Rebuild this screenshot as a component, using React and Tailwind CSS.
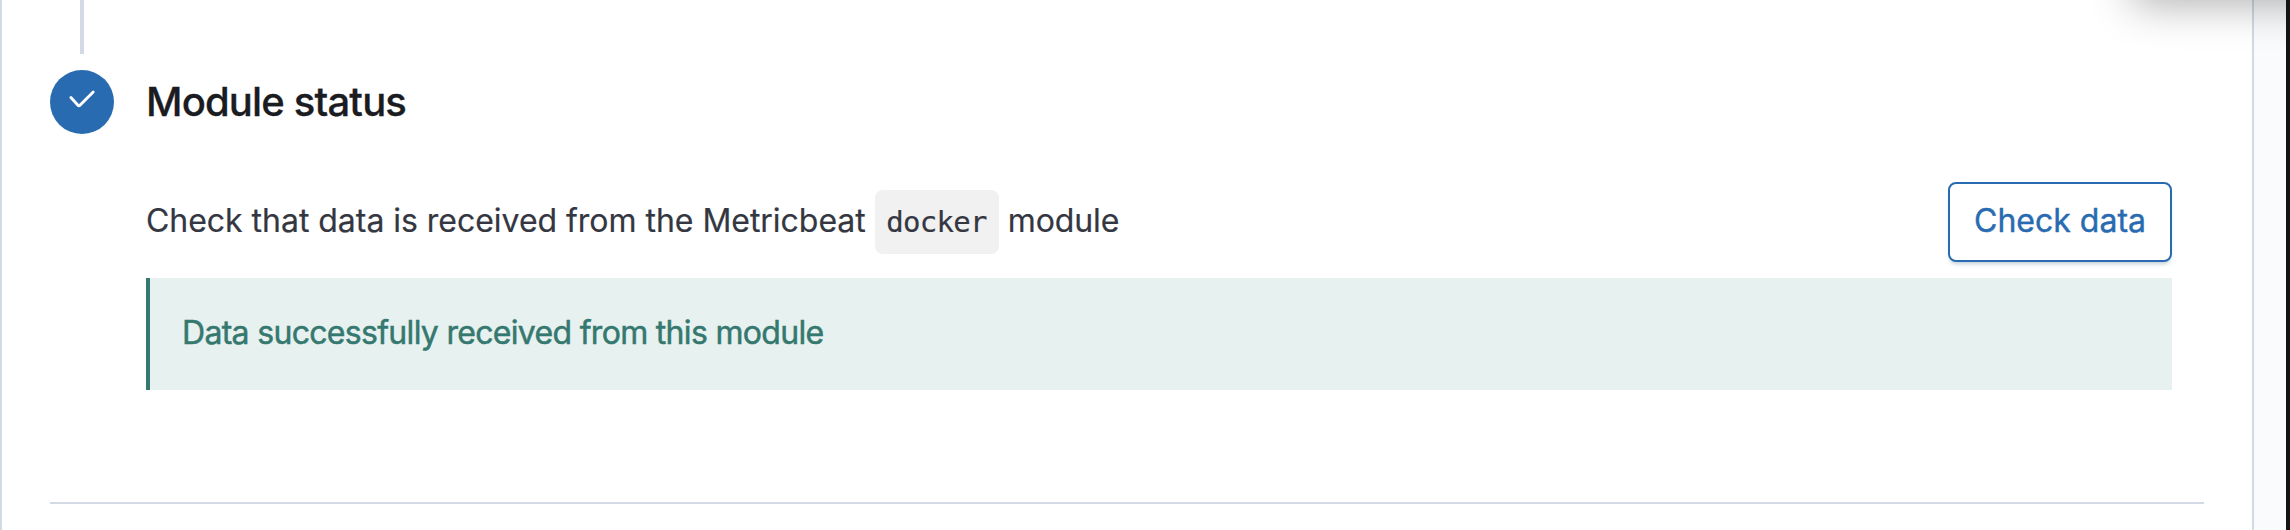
function StepIcon() {
  return (
    <span className="flex size-16 shrink-0 items-center justify-center rounded-full bg-[#286bb0]">
      <svg
        width="64"
        height="64"
        viewBox="0 0 64 64"
        fill="none"
        stroke="#fff"
        strokeWidth="2.9"
        strokeLinecap="round"
        strokeLinejoin="round"
      >
        <path d="M20.9 27.6l7.3 7.9a1 1 0 0 0 1.5 0L43.2 22" />
      </svg>
    </span>
  );
}

function ModuleStatus() {
  return (
    <section className="flex flex-col pl-8">
      <h2 className="flex h-16 items-center text-[40px] font-medium tracking-[-0.84px] text-[#1a1c21] [-webkit-text-stroke:0.3px]">
        Module status
      </h2>
      <div className="mt-12 flex h-20 items-center justify-between">
        <p className="flex items-center text-[32px] tracking-[-0.03px] whitespace-nowrap text-[#343741] [-webkit-text-stroke:0.2px]">
          <span className="pb-0.5">Check that data is received from the Metricbeat</span>
          <code className="mr-[9px] ml-[9px] flex h-16 w-31 shrink-0 items-center rounded-lg bg-[#f1f1f1] pt-0.5 pl-[11.5px] font-['DejaVu_Sans_Mono',monospace] text-[29px] tracking-[-0.7px]">
            docker
          </code>
          <span className="pb-0.5 tracking-[-0.1px]">module</span>
        </p>
        <button className="flex h-20 w-56 items-center justify-center rounded-lg border-2 border-[#286bb0] bg-white pb-0.5 text-[32px] text-[#286bb0] shadow-[0_4px_4px_-2px_rgba(54,97,126,0.3)] [-webkit-text-stroke:0.4px]">
          Check data
        </button>
      </div>
      <div className="mt-4 flex h-28 items-center border-l-4 border-[#35786f] bg-[#e7f1ef] pb-0.5 pl-8 text-[32px] tracking-[-0.69px] text-[#35786f] [-webkit-text-stroke:0.5px]">
        Data successfully received from this module
      </div>
    </section>
  );
}

export default function App() {
  return (
    <div className="relative flex h-[530px] w-[2290px] overflow-hidden bg-[#fafbfd] font-['Inter',sans-serif]">
      <main className="flex w-[2254px] flex-col border-x-2 border-[#d3dae6] bg-white pr-12 pl-12">
        <div className="flex h-[502px]">
          <div className="flex w-16 flex-col items-center">
            <div className="mb-4 h-[54px] w-1 bg-[#d3dae6]" />
            <StepIcon />
          </div>
          <div className="flex-1 pt-[70px] pr-8">
            <ModuleStatus />
          </div>
        </div>
        <hr className="h-0.5 border-0 bg-[#d3dae6]" />
      </main>
      <div className="w-8 bg-[#fafbfd]" />
      <div className="w-1 bg-[#141416]" />
      <div className="absolute -top-20 left-[2132px] h-20 w-[154px] [clip-path:inset(0_0_-60px_-60px)]">
        <div className="h-20 w-60 rounded-lg shadow-[0_4px_44px_rgba(0,0,0,0.32)]" />
      </div>
    </div>
  );
}
